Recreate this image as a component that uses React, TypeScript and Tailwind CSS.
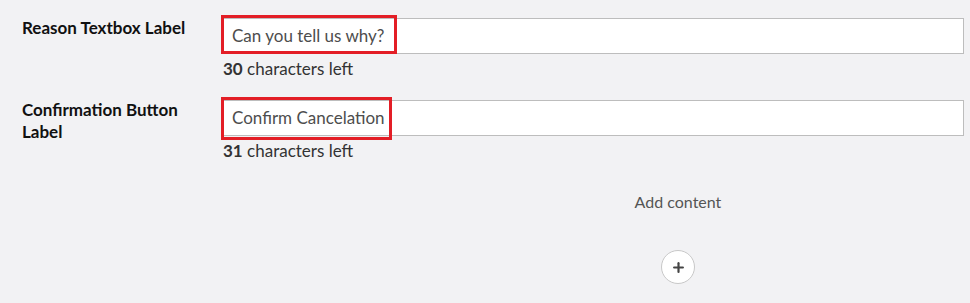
import { Plus } from "lucide-react";

const fields = [
  { label: "Reason Textbox Label", value: "Can you tell us why?", left: 30, mark: "w-[176px] h-[39px] -top-[3px]" },
  { label: "Confirmation Button Label", value: "Confirm Cancelation", left: 31, mark: "w-[171px] h-[43px] -top-[3px]" },
];

const App = () => {
  return (
    <div className="w-[970px] h-[303px] bg-[#f2f2f4] font-['Lato','Liberation_Sans',sans-serif] overflow-hidden">
      <div className="pt-[18px] pl-[22px] pr-[6px] flex flex-col gap-[20px]">
        {fields.map((f) => (
          <div key={f.label} className="flex">
            <div className="w-[201px] shrink-0 pr-[30px] -mt-[1px] text-[17px] leading-[22px] font-bold text-[#111]">
              {f.label}
            </div>
            <div className="flex-1">
              <div className="relative">
                <div className="h-[36px] bg-white border border-[#bdbdbd] flex items-center pl-[8px] text-[17px] text-[#4d4d4d]">
                  {f.value}
                </div>
                <span className={`absolute -left-[2px] border-[3px] border-[#e31e26] ${f.mark}`}></span>
              </div>
              <div className="mt-[4px] text-[17px] leading-[22px] text-[#333]">
                <span className="font-bold">{f.left}</span> characters left
              </div>
            </div>
          </div>
        ))}
      </div>
      <div className="ml-[386px] w-[584px] flex flex-col items-center mt-[29px]">
        <div className="text-[16px] leading-[22px] text-[#555]">Add content</div>
        <button className="mt-[37px] w-[34px] h-[34px] rounded-full bg-white border border-[#c8c8c8] flex items-center justify-center">
          <Plus size={15} strokeWidth={3.5} className="text-[#444]" />
        </button>
      </div>
    </div>
  );
};

export default App;
